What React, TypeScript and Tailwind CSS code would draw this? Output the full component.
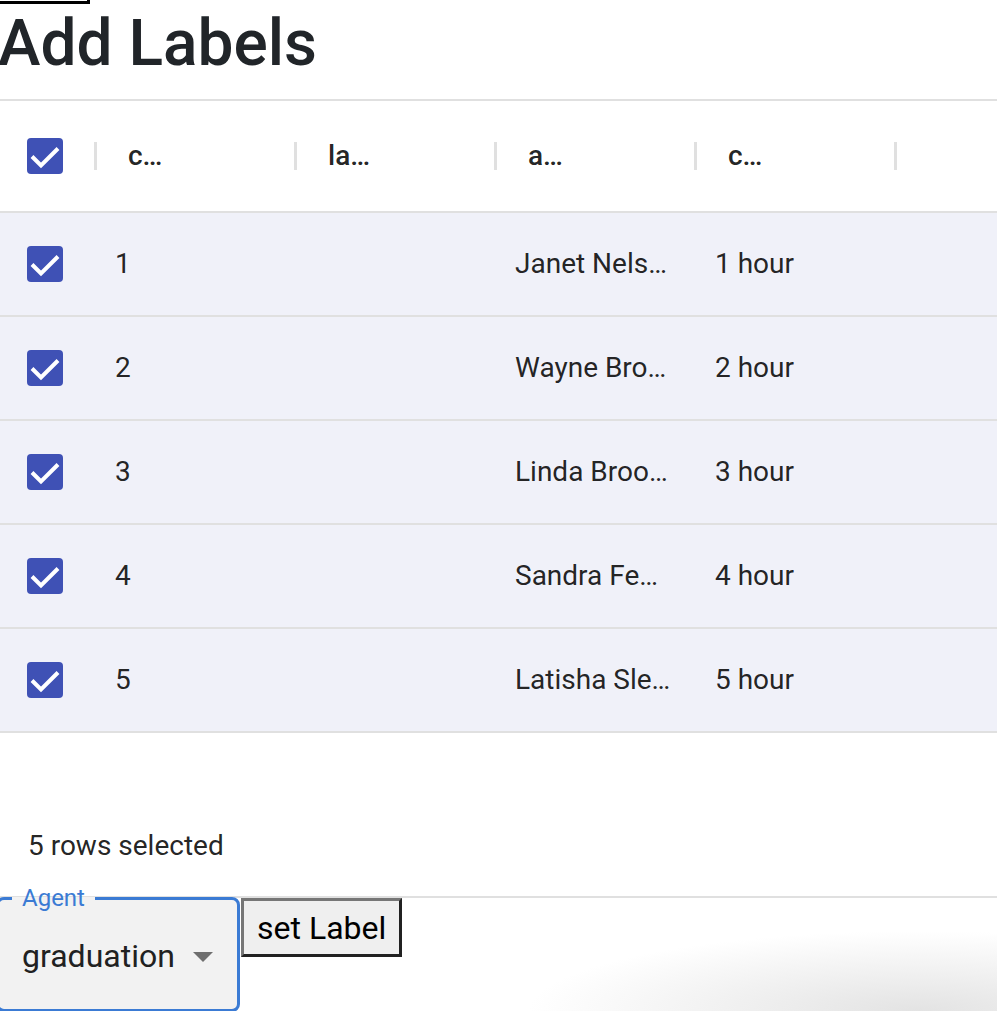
import { ReactNode } from "react";

const rows = [
  { id: 1, agent: "Janet Nels…", time: "1 hour" },
  { id: 2, agent: "Wayne Bro…", time: "2 hour" },
  { id: 3, agent: "Linda Broo…", time: "3 hour" },
  { id: 4, agent: "Sandra Fe…", time: "4 hour" },
  { id: 5, agent: "Latisha Sle…", time: "5 hour" },
];

const headers = ["c…", "la…", "a…", "c…"];

function CheckBox() {
  return (
    <svg width="36" height="36" viewBox="0 0 36 36" className="shrink-0">
      <rect x="0" y="0" width="36" height="36" rx="4" fill="#3f51b5" />
      <path
        d="M5 18.5 L14 27.5 L31 10.5"
        fill="none"
        stroke="#ffffff"
        strokeWidth="4"
      />
    </svg>
  );
}

function Separator() {
  return <div className="w-[3px] h-[28px] bg-[#e0e0e0] mr-[3px] shrink-0" />;
}

function Cell({ children, wide = true }: { children?: ReactNode; wide?: boolean }) {
  return (
    <div
      className={`${wide ? "w-[200px]" : "w-[100px]"} h-full flex items-center shrink-0 overflow-hidden`}
    >
      {children}
    </div>
  );
}

export default function App() {
  return (
    <div className="relative w-[997px] h-[1011px] overflow-hidden bg-white text-[rgba(0,0,0,0.87)] font-['Roboto','Liberation_Sans',sans-serif]">
      {/* tail of a button scrolled off the top */}
      <div className="w-[90px] h-[4px] border-r-[3px] border-b-[3px] border-black" />

      <h1 className="text-[64px] font-medium leading-[77px] text-[#212529] ml-[-2px] mt-[1px] mb-[17px] whitespace-nowrap">
        Add Labels
      </h1>

      {/* data grid */}
      <div className="w-[1100px] border-y-2 border-[#e0e0e0]">
        <div className="h-[112px] flex border-b-2 border-[#e0e0e0]">
          <Cell wide={false}>
            <div className="pl-[27px] flex-1">
              <CheckBox />
            </div>
            <Separator />
          </Cell>
          {headers.map((h, i) => (
            <Cell key={i}>
              <span className="pl-[28px] flex-1 text-[28px] font-medium">{h}</span>
              <Separator />
            </Cell>
          ))}
        </div>

        {rows.map((r) => (
          <div key={r.id} className="h-[104px] flex bg-[#f0f1f9] border-b-2 border-[#e0e0e0]">
            <Cell wide={false}>
              <div className="pl-[27px]">
                <CheckBox />
              </div>
            </Cell>
            <Cell>
              <span className="pl-[15px] text-[28px]">{r.id}</span>
            </Cell>
            <Cell />
            <Cell>
              <span className="pl-[15px] text-[28px] whitespace-nowrap">{r.agent}</span>
            </Cell>
            <Cell>
              <span className="pl-[15px] text-[28px] whitespace-nowrap">{r.time}</span>
            </Cell>
          </div>
        ))}

        <div className="h-[63px]" />
        <div className="h-[100px] flex items-center pl-[28px] text-[28px]">5 rows selected</div>
      </div>

      {/* controls */}
      <div className="flex items-start mt-[-12px]">
        <fieldset className="ml-[-4px] w-[244px] h-[126px] border-[3px] border-[#3b7bd4] rounded-[8px] bg-[#f2f2f2] flex flex-col">
          <legend className="ml-[13px] px-[10px] text-[24px] leading-[24px] text-[#3b7bd4]">Agent</legend>
          <div className="flex-1 flex items-center justify-between pl-[23px] pr-[10px] pb-[8px]">
            <span className="text-[32px] text-[#212121]">graduation</span>
            <svg width="48" height="48" viewBox="0 0 24 24">
              <path d="M7 10l5 5 5-5z" fill="rgba(0,0,0,0.54)" />
            </svg>
          </div>
        </fieldset>
        <button className="mt-[12px] ml-[1px] h-[59px] px-[13px] bg-[#efefef] text-black text-[32px] leading-none border-[3px] border-t-[#767676] border-l-[#767676] border-b-[#212121] border-r-[#212121]">
          set Label
        </button>
      </div>

      <div className="pointer-events-none absolute right-0 bottom-0 w-[520px] h-[80px] bg-[radial-gradient(ellipse_75%_100%_at_85%_100%,#e3e3e3,#ffffff00)]" />
    </div>
  );
}
